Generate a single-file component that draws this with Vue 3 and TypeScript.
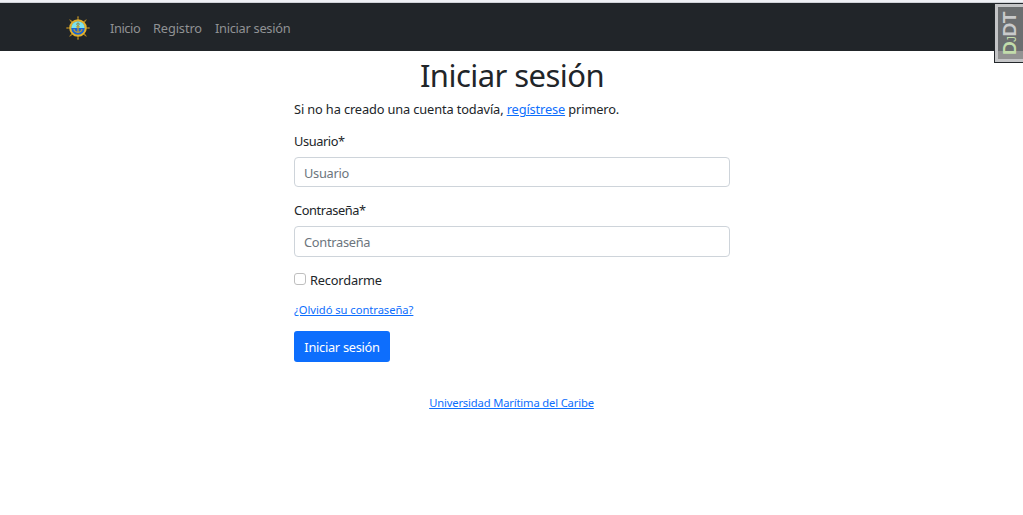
<script setup lang="ts">
import { ref } from 'vue'

interface NavItem { label: string; cls: string }

const navItems: NavItem[] = [
  { label: 'Inicio', cls: 'nav-home' },
  { label: 'Registro', cls: 'nav-register' },
  { label: 'Iniciar sesión', cls: 'nav-login' },
]
const spokes: number[] = [0, 45, 90, 135, 180, 225, 270, 315]
const username = ref('')
const password = ref('')
const remember = ref(false)
</script>

<template>
  <div class="page">
    <nav class="navbar">
      <a class="brand" href="#" aria-label="Inicio">
        <svg width="26" height="26" viewBox="0 0 26 26">
          <g v-for="a in spokes" :key="a" :transform="`rotate(${a} 13 13)`">
            <path d="M13 1V5" stroke="#a98226" stroke-width="1" />
            <circle cx="13" cy="2.8" r=".7" fill="#a98226" />
          </g>
          <circle cx="13" cy="13" r="7.7" fill="#3e91b0" stroke="#e2b02d" stroke-width="2.2" />
          <path d="M6.4 13a6.6 6.6 0 0 1 13.200 0z" fill="#7de3ec" />
          <path d="M6.4 13h13.200a6.6 6.6 0 0 1-13.200 0z" fill="#1762d5" />
          <circle cx="13" cy="9.200" r="1.200" fill="none" stroke="#8a7630" stroke-width=".9" />
          <path d="M13 10.400v6.600M11.200 11.800h3.600M9 14c.3 2.200 1.600 3.300 4 3.300s3.700-1.100 4-3.300" fill="none" stroke="#c59b2c" stroke-width="1.200" />
        </svg>
      </a>
      <a v-for="item in navItems" :key="item.label" class="nav-link" :class="item.cls" href="#">{{ item.label }}</a>
    </nav>

    <main class="content">
      <h1><span>Iniciar sesión</span></h1>
      <p class="intro">Si no ha creado una cuenta todavía, <a href="#">regístrese</a> primero.</p>
      <form @submit.prevent>
        <label class="label" for="user">Usuario*</label>
        <input id="user" v-model="username" class="control user-control" type="text" placeholder="Usuario">
        <label class="label second" for="pass">Contraseña*</label>
        <input id="pass" v-model="password" class="control" type="password" placeholder="Contraseña">
        <label class="check"><input v-model="remember" type="checkbox"><span>Recordarme</span></label>
        <a class="forgot" href="#">¿Olvidó su contraseña?</a>
        <button class="submit" type="submit">Iniciar sesión</button>
      </form>
    </main>
    <footer><a href="#">Universidad Marítima del Caribe</a></footer>

    <div class="debug-handle"><span class="debug-text"><span class="green">D</span><span class="green small">J</span>DT</span></div>
  </div>
</template>

<style>
html, body { margin: 0; background: #fff; }
</style>

<style scoped>
.page {
  position: relative;
  box-sizing: border-box;
  height: 515px;
  overflow: hidden;
  border-top: 2px solid #eef0f4;
  color: #212529;
  font: 12.8px/19.2px "Noto Sans", "Open Sans", sans-serif;
}
a { color: #0d6efd; text-decoration: underline; text-underline-offset: 1px; }
.navbar {
  display: flex;
  align-items: center;
  box-sizing: border-box;
  height: 49px;
  padding: 3px 0 0 65px;
  border-top: 1px solid #cfd2d7;
  background: #212529;
}
.brand { display: flex; width: 26px; margin: -2px 19px 0 0; }
.nav-link { margin-right: 13px; color: #909294; text-decoration: none; white-space: nowrap; }
.nav-home { width: 30px; letter-spacing: -.4px; }
.nav-register { width: 49px; letter-spacing: -.12px; }
.nav-login { letter-spacing: -.28px; }
.content { width: 436px; margin: 0 auto; padding: 5px 0 0 1px; }
h1 { margin: 0 0 6px; font-size: 31px; line-height: 38px; font-weight: 400; text-align: center; letter-spacing: -.55px; }
.intro { margin: 0 0 13px; white-space: nowrap; letter-spacing: -.13px; }
.label { display: block; margin-bottom: 6px; letter-spacing: -.4px; }
.control {
  display: block;
  box-sizing: border-box;
  width: 436px;
  height: 31px;
  margin: 0;
  padding: 1px 9px 0;
  border: 1px solid #ced4da;
  border-radius: 4px;
  outline: none;
  background: #fff;
  color: #212529;
  font: inherit;
  letter-spacing: -.28px;
}
.user-control { height: 30px; padding-top: 2px; }
.control::placeholder { color: #6c757d; opacity: 1; }
.label.second { margin-top: 14px; margin-bottom: 5px; }
.check { display: flex; align-items: center; margin-top: 14px; letter-spacing: -.18px; }
.check input {
  appearance: none;
  box-sizing: border-box;
  width: 12px;
  height: 12px;
  margin: -3px 4px 0 0;
  border: 1px solid #bfbfbf;
  border-radius: 3px;
}
.check input:checked { background: #0d6efd; }
.forgot { display: block; width: max-content; margin-top: 10px; font-size: 11.2px; letter-spacing: -.04px; }
.submit {
  display: block;
  box-sizing: border-box;
  width: 96px;
  height: 31px;
  margin-top: 12px;
  padding: 2px 0 0;
  border: 0;
  border-radius: 3px;
  background: #0d6efd;
  color: #fff;
  font: inherit;
  letter-spacing: -.28px;
  white-space: nowrap;
}
footer { margin-top: 31px; text-align: center; font-size: 11.2px; letter-spacing: -.15px; }
.debug-handle {
  position: absolute;
  top: 1px;
  right: -5px;
  box-sizing: border-box;
  width: 34px;
  height: 60px;
  border: 1px solid #24282c;
  background: linear-gradient(#6b6e70 47px, #929292 47px);
  box-shadow: inset 0 0 0 3px #c4c5c7;
}
.debug-text {
  position: absolute;
  left: 3px;
  top: 51px;
  color: #c9cacb;
  font: bold 19px/24px "Liberation Sans", sans-serif;
  letter-spacing: -.6px;
  white-space: nowrap;
  transform: rotate(-90deg);
  transform-origin: 0 0;
}
.green { color: #c2dcab; }
.small { font-size: 12px; font-weight: 400; }
</style>
